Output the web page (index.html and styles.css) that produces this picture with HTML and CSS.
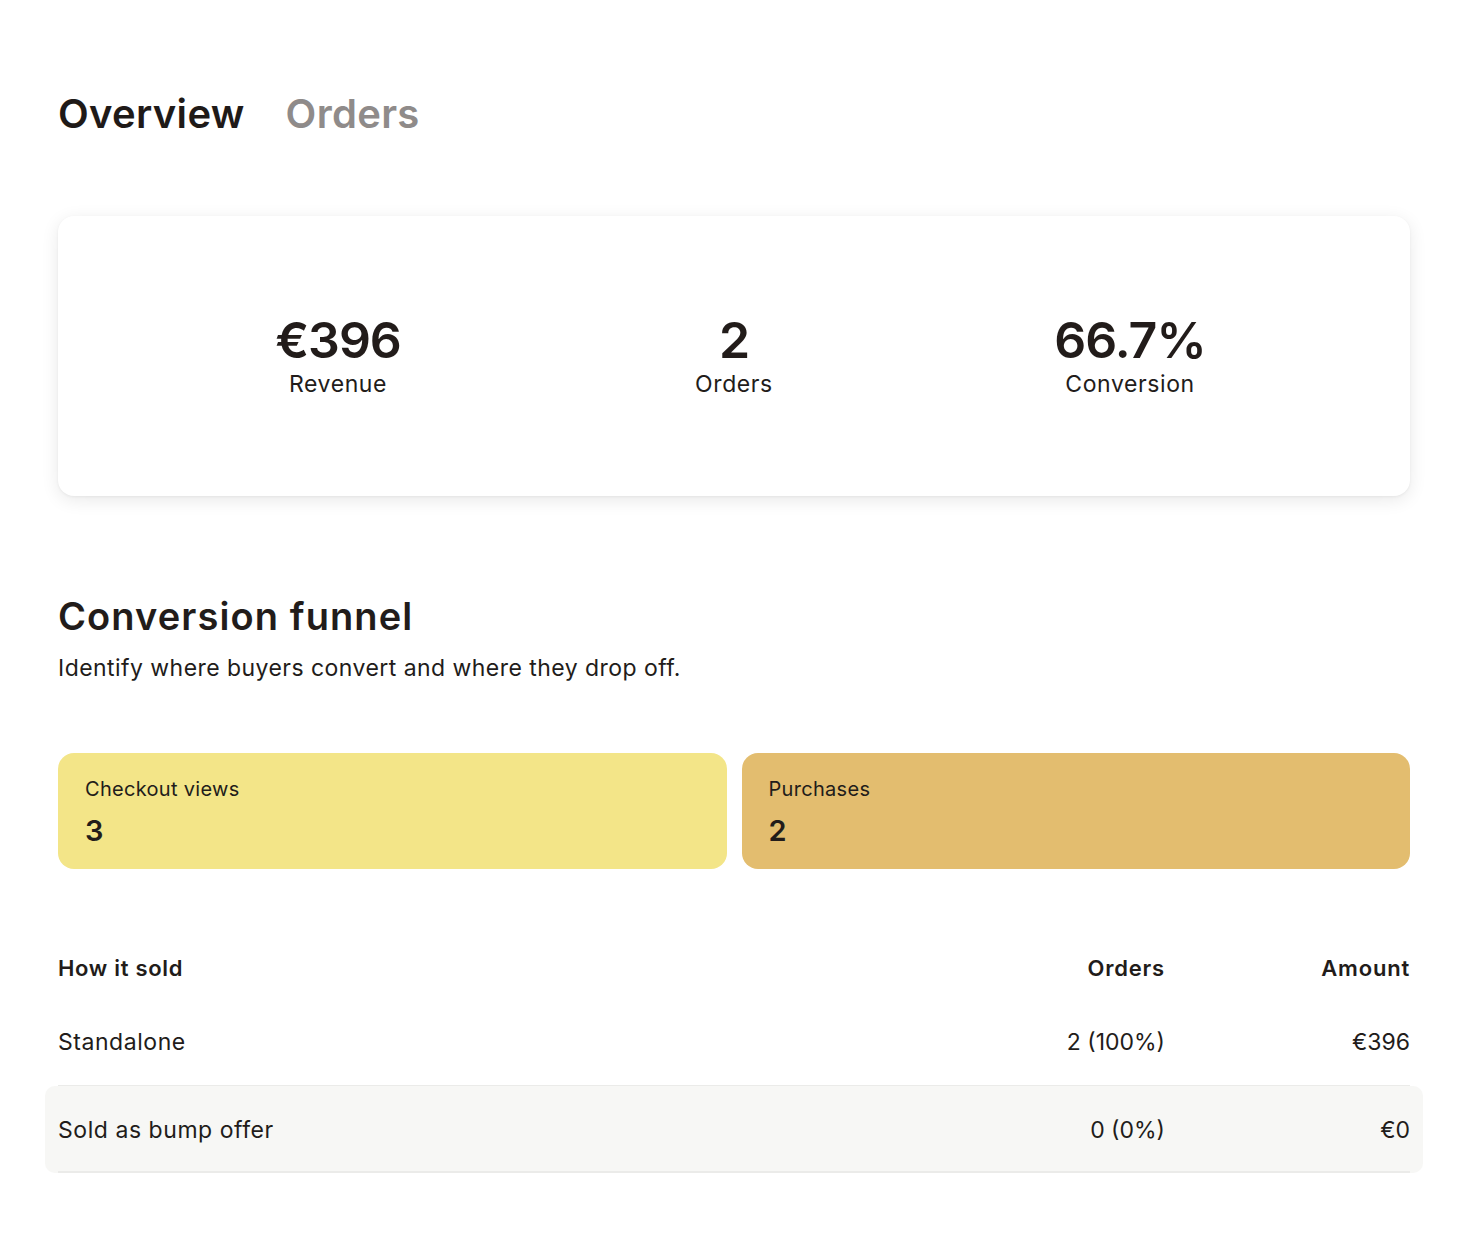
FILE: index.html
```html
<!DOCTYPE html>
<html lang="en">
<head>
<meta charset="utf-8">
<title>Overview</title>
<link rel="stylesheet" href="styles.css">
</head>
<body>
<main class="page">
  <nav class="tabs">
    <span class="tab active">Overview</span>
    <span class="tab">Orders</span>
  </nav>

  <section class="stats-card">
    <div class="stat">
      <div class="stat-value">€396</div>
      <div class="stat-label">Revenue</div>
    </div>
    <div class="stat">
      <div class="stat-value">2</div>
      <div class="stat-label">Orders</div>
    </div>
    <div class="stat">
      <div class="stat-value">66.7%</div>
      <div class="stat-label">Conversion</div>
    </div>
  </section>

  <section class="funnel">
    <h2 class="funnel-title">Conversion funnel</h2>
    <p class="funnel-sub">Identify where buyers convert and where they drop off.</p>
    <div class="funnel-steps">
      <div class="step step-views">
        <div class="step-label">Checkout views</div>
        <div class="step-value">3</div>
      </div>
      <div class="step step-purchases">
        <div class="step-label">Purchases</div>
        <div class="step-value">2</div>
      </div>
    </div>
  </section>

  <section class="sold-table">
    <div class="row head">
      <div class="c-name">How it sold</div>
      <div class="c-orders">Orders</div>
      <div class="c-amount">Amount</div>
    </div>
    <div class="row">
      <div class="c-name">Standalone</div>
      <div class="c-orders">2 (100%)</div>
      <div class="c-amount">€396</div>
    </div>
    <div class="row hl">
      <div class="c-name">Sold as bump offer</div>
      <div class="c-orders">0 (0%)</div>
      <div class="c-amount">€0</div>
    </div>
  </section>
</main>
</body>
</html>
```

FILE: styles.css
```css
* { box-sizing: border-box; }
html, body { margin: 0; padding: 0; background: #ffffff; }
body {
  font-family: Inter, "Noto Sans", "Liberation Sans", sans-serif;
  color: #221c1a;
}
.page {
  padding: 86px 54px 60px 58px;
}
.tabs {
  display: flex;
  gap: 41px;
  height: 54px;
  align-items: center;
}
.tab {
  font-size: 40px;
  font-weight: 600;
  color: #8f8b8a;
  letter-spacing: 0.3px;
}
.tab.active { color: #1f1a18; }

.stats-card {
  margin-top: 76px;
  height: 280px;
  border-radius: 16px;
  background: #fff;
  box-shadow: 0 4px 18px rgba(0,0,0,0.09), 0 1px 3px rgba(0,0,0,0.05);
  display: grid;
  grid-template-columns: repeat(3, 1fr);
  padding: 0 82px;
  align-items: center;
}
.stat {
  display: flex;
  flex-direction: column;
  align-items: center;
  padding-bottom: 2px;
}
.stat-value {
  font-size: 50px;
  font-weight: 600;
  line-height: 58px;
  letter-spacing: -1px;
}
.stat-label {
  font-size: 23px;
  line-height: 30px;
  letter-spacing: 0.6px;
}

.funnel { margin-top: 96px; }
.funnel-title {
  margin: 0;
  font-size: 38px;
  font-weight: 600;
  line-height: 48px;
  letter-spacing: 1.1px;
}
.funnel-sub {
  margin: 12px 0 0;
  font-size: 23px;
  line-height: 32px;
  letter-spacing: 0.45px;
}
.funnel-steps {
  margin-top: 69px;
  display: grid;
  grid-template-columns: 1fr 1fr;
  gap: 15px;
}
.step {
  height: 116px;
  border-radius: 16px;
  padding: 23px 27px;
}
.step-views { background: #f3e588; }
.step-purchases { background: #e3bd6f; }
.step-label {
  font-size: 20px;
  line-height: 26px;
  letter-spacing: 0.3px;
}
.step-value {
  margin-top: 12px;
  font-size: 29px;
  font-weight: 600;
  line-height: 34px;
}

.sold-table { margin-top: 86px; }
.row {
  display: grid;
  grid-template-columns: 1fr 200px 245px;
  align-items: center;
  height: 87px;
  font-size: 23px;
  letter-spacing: 0.55px;
  border-bottom: 1px solid #ebebe9;
}
.row.head {
  height: 44px;
  font-weight: 600;
  font-size: 22px;
  letter-spacing: 0.7px;
  border-bottom: none;
  align-items: start;
  padding-top: 0;
}
.c-orders, .c-amount { text-align: right; }
.row .c-orders, .row .c-amount { letter-spacing: 0; }
.row.head .c-orders, .row.head .c-amount { letter-spacing: 0.8px; }
.row.hl {
  background:
    linear-gradient(#ebebe9, #ebebe9) 13px 100% / calc(100% - 26px) 2px no-repeat,
    #f7f7f5;
  margin: 0 -13px;
  padding: 0 13px;
  border-radius: 10px;
  border-bottom: none;
}
```
